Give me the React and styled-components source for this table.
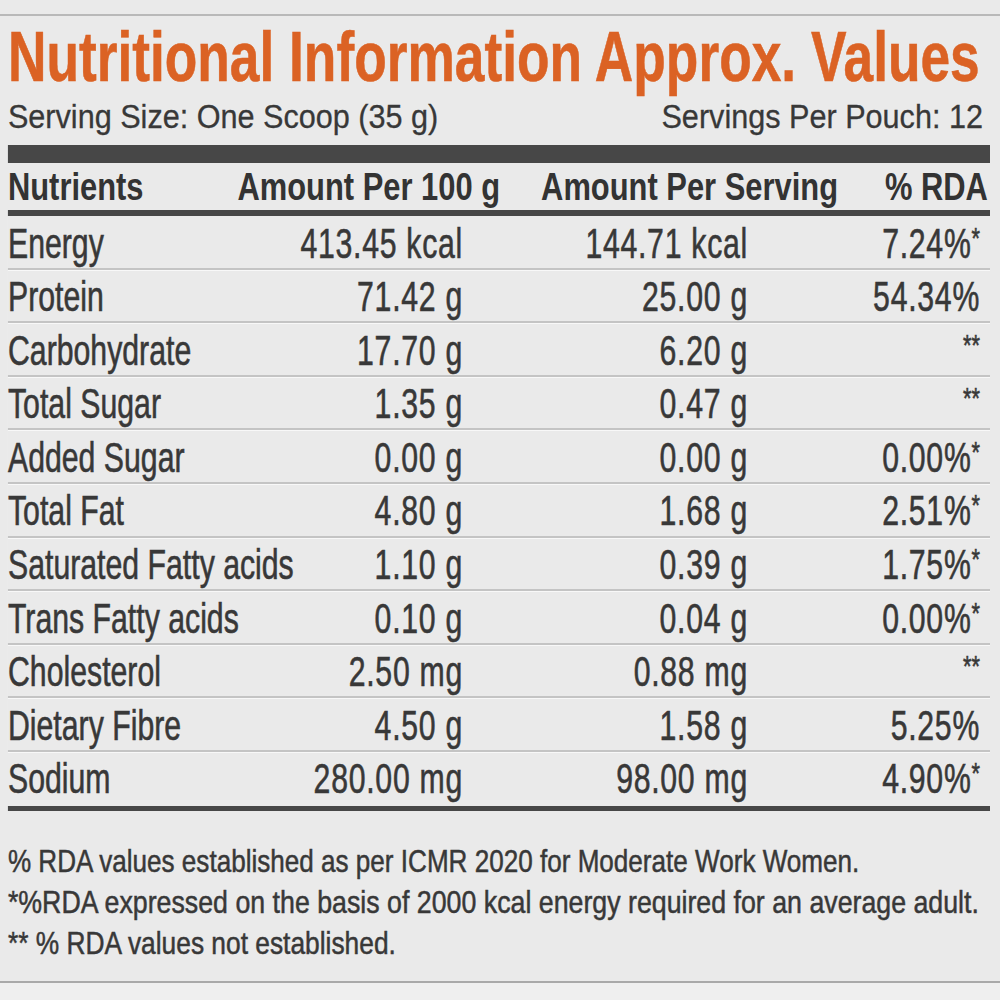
import React from 'react';
import styled, { createGlobalStyle } from 'styled-components';

// the print uses a condensed grotesque; we squeeze Liberation Sans to match
const SQUEEZE = 0.72;
const u = (px) => `${(px / SQUEEZE).toFixed(2)}px`;

const GlobalStyle = createGlobalStyle`
  html, body {
    margin: 0;
    padding: 0;
    background: #eaeaea;
    overflow: hidden;
  }
  body {
    font-family: "Liberation Sans", Arial, sans-serif;
    color: #383838;
  }
`;

const Label = styled.div`
  width: ${u(1000)};
  height: 1000px;
  transform: scaleX(${SQUEEZE});
  transform-origin: 0 0;
  background: #eaeaea;
  display: flex;
  flex-direction: column;
`;

const TopRule = styled.div`
  margin-top: 14px;
  height: 2px;
  background: #b9b9b9;
`;

const Inner = styled.div`
  padding: 0 ${u(10)} 0 ${u(8)};
`;

const Stretch = styled.span`
  display: inline-block;
  transform: scaleX(${({ $sx }) => $sx});
  transform-origin: ${({ $origin }) => $origin || 'left'} center;
`;

const Title = styled.h1`
  margin: 0;
  padding-top: 2px;
  height: 78px;
  line-height: 78px;
  font-size: 70px;
  font-weight: bold;
  color: #db6224;
  -webkit-text-stroke: 0.6px #db6224;
  white-space: nowrap;
`;

const ServingRow = styled.div`
  display: flex;
  justify-content: space-between;
  height: 40px;
  line-height: 40px;
  font-size: 34px;
  padding-right: ${u(7)};
  white-space: nowrap;
  -webkit-text-stroke: 0.3px #383838;
`;

const ThickBar = styled.div`
  margin-top: ${({ $gap }) => $gap || 0}px;
  height: ${({ $h }) => $h}px;
  background: #474747;
`;

const Grid = styled.div`
  display: grid;
  grid-template-columns: ${u(212)} ${u(280)} ${u(338)} ${u(152)};
`;

const HeadRow = styled(Grid)`
  height: 47px;
  line-height: 47px;
  font-size: 39px;
  font-weight: bold;
  color: #333333;
`;

const HeadCell = styled.div`
  text-align: ${({ $align }) => $align || 'right'};
  padding-right: ${({ $pad }) => u($pad || 0)};
  white-space: nowrap;
`;

const Row = styled(Grid)`
  box-sizing: border-box;
  height: 53.6px;
  border-bottom: ${({ $last }) => ($last ? 'none' : '2px solid #c4c4c4')};
  box-shadow: ${({ $last }) => ($last ? 'none' : '0 1px 0 #f8f8f8')};
`;

const Cell = styled.div`
  font-size: 42px;
  padding-top: 4.5px;
  line-height: 46px;
  white-space: nowrap;
  text-align: ${({ $align }) => $align || 'right'};
  padding-right: ${({ $pad }) => u($pad || 0)};
  letter-spacing: ${({ $align }) => ($align === 'left' ? 0 : 1)}px;
  -webkit-text-stroke: 0.6px #383838;
`;

const Mark = styled.span`
  font-size: 0.72em;
  line-height: 0;
  vertical-align: 0.32em;
  letter-spacing: 0;
`;

const Notes = styled.div`
  margin-top: 30px;
  font-size: 32px;
  line-height: 41px;
  white-space: nowrap;
  -webkit-text-stroke: 0.5px #383838;
`;

const NoteLine = styled.div`
  height: 41px;
`;

const BottomRule = styled.div`
  margin-top: 17px;
  height: 2px;
  background: #a9a9a9;
`;

const Tail = styled.div`
  flex: 1;
  background: #efefef;
`;

const nutrients = [
  ['Energy', '413.45 kcal', '144.71 kcal', '7.24%', '*'],
  ['Protein', '71.42 g', '25.00 g', '54.34%', ''],
  ['Carbohydrate', '17.70 g', '6.20 g', '', '**'],
  ['Total Sugar', '1.35 g', '0.47 g', '', '**'],
  ['Added Sugar', '0.00 g', '0.00 g', '0.00%', '*'],
  ['Total Fat', '4.80 g', '1.68 g', '2.51%', '*'],
  ['Saturated Fatty acids', '1.10 g', '0.39 g', '1.75%', '*'],
  ['Trans Fatty acids', '0.10 g', '0.04 g', '0.00%', '*'],
  ['Cholesterol', '2.50 mg', '0.88 mg', '', '**'],
  ['Dietary Fibre', '4.50 g', '1.58 g', '5.25%', ''],
  ['Sodium', '280.00 mg', '98.00 mg', '4.90%', '*'],
];

const notes = [
  ['% RDA values established as per ICMR 2020 for Moderate Work Women.', 1.132],
  ['*%RDA expressed on the basis of 2000 kcal energy required for an average adult.', 1.161],
  ['** % RDA values not established.', 1.143],
];

const App = () => {
  return (
    <>
      <GlobalStyle />
      <Label>
        <TopRule />
        <Inner>
          <Title>
            <Stretch $sx={1.057}>Nutritional Information Approx. Values</Stretch>
          </Title>
          <ServingRow>
            <Stretch $sx={1.25}>Serving Size: One Scoop (35 g)</Stretch>
            <Stretch $sx={1.25} $origin='right'>
              Servings Per Pouch: 12
            </Stretch>
          </ServingRow>
          <ThickBar $gap={9} $h={18} />
          <HeadRow>
            <HeadCell $align='left'>
              <Stretch $sx={1.1}>Nutrients</Stretch>
            </HeadCell>
            <HeadCell>
              <Stretch $sx={1.1} $origin='right'>
                Amount Per 100 g
              </Stretch>
            </HeadCell>
            <HeadCell>
              <Stretch $sx={1.1} $origin='right'>
                Amount Per Serving
              </Stretch>
            </HeadCell>
            <HeadCell $pad={2}>
              <Stretch $sx={1.1} $origin='right'>
                % RDA
              </Stretch>
            </HeadCell>
          </HeadRow>
          <ThickBar $h={6} />
          {nutrients.map(([name, per100, perServing, rda, mark], i) => (
            <Row key={name} $last={i === nutrients.length - 1}>
              <Cell $align='left'>{name}</Cell>
              <Cell $pad={37}>{per100}</Cell>
              <Cell $pad={90}>{perServing}</Cell>
              <Cell $pad={10}>
                {rda}
                {mark && <Mark>{mark}</Mark>}
              </Cell>
            </Row>
          ))}
          <ThickBar $h={5} />
          <Notes>
            {notes.map(([note, sx]) => (
              <NoteLine key={note}>
                <Stretch $sx={sx}>{note}</Stretch>
              </NoteLine>
            ))}
          </Notes>
        </Inner>
        <BottomRule />
        <Tail />
      </Label>
    </>
  );
};

export default App;
